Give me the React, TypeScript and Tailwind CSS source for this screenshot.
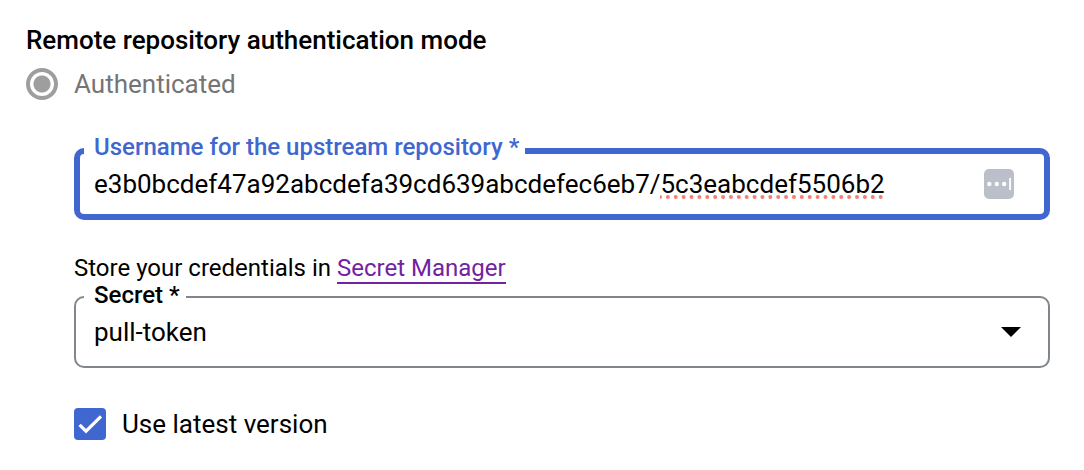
import { useState } from "react";

function SpellingMark() {
  return (
    <svg
      aria-hidden="true"
      className="pointer-events-none absolute bottom-[2px] left-[566px] h-1 w-[224px]"
      viewBox="0 0 224 4"
    >
      <line x1="0" y1="2" x2="223" y2="2" stroke="#f47f73" strokeWidth="4" strokeLinecap="round" strokeDasharray="0 7.88" />
    </svg>
  );
}

export default function App() {
  const [username, setUsername] = useState("e3b0bcdef47a92abcdefa39cd639abcdefec6eb7/5c3eabcdef5506b2");
  const [latest, setLatest] = useState(true);

  return (
    <main className="min-h-screen bg-white pt-6 pr-[34px] pb-[30px] pl-[26px] font-['Roboto',sans-serif] text-[26px] text-black">
      <h2 id="auth-mode" className="text-[26px] leading-8 font-medium">
        Remote repository authentication mode
      </h2>

      <div role="radiogroup" aria-labelledby="auth-mode" className="mt-3">
        <label className="flex items-center gap-4 leading-8 text-[#757575]">
          <input
            type="radio"
            name="auth-mode"
            checked
            disabled
            readOnly
            className="size-8 shrink-0 appearance-none rounded-full border-4 border-[#9e9e9e] bg-[radial-gradient(circle,#9e9e9e_8px,transparent_9px)]"
          />
          Authenticated
        </label>
      </div>

      <div className="mt-[35px] pl-12">
        <fieldset className="min-w-0 rounded-[10px] border-6 border-[#4067d0] pr-[30px] pb-[13px] pl-1">
          <legend className="pr-[6px] pb-2 pl-[10px] text-[24px] leading-6 font-medium text-[#4067d0]">
            <label htmlFor="username">Username for the upstream repository *</label>
          </legend>
          <div className="flex h-[34px] items-center gap-4 pl-[10px]">
            <div className="relative min-w-0 grow">
              <input
                id="username"
                type="text"
                required
                spellCheck={false}
                value={username}
                onChange={(e) => setUsername(e.target.value)}
                className="block h-[34px] w-full bg-transparent outline-none"
              />
              <SpellingMark />
            </div>
            <button type="button" aria-label="Fill from password manager" className="shrink-0">
              <svg viewBox="0 0 30 30" className="block size-[30px]" aria-hidden="true">
                <rect width="30" height="30" rx="5" fill="#bbbfca" />
                <circle cx="5.3" cy="15" r="2.2" fill="#fff" />
                <circle cx="12.8" cy="15" r="2.2" fill="#fff" />
                <circle cx="20.2" cy="15" r="2.2" fill="#fff" />
                <rect x="25.2" y="9" width="1.8" height="12" fill="#fff" />
              </svg>
            </button>
          </div>
        </fieldset>

        <p className="mt-[33px] text-[24px] leading-[30px]">
          Store your credentials in{" "}
          <a href="#secret-manager" className="border-b-2 border-[#7322a0] text-[#7322a0]">
            Secret Manager
          </a>
        </p>

        <fieldset className="min-w-0 rounded-[10px] border-2 border-[#80868b] pb-[13px] pl-2">
          <legend className="pr-[6px] pb-1 pl-[10px] text-[24px] leading-6 font-medium">
            <label htmlFor="secret">Secret *</label>
          </legend>
          <div className="relative">
            <select id="secret" required className="block h-[42px] w-full appearance-none bg-transparent pl-[10px] outline-none">
              <option>pull-token</option>
            </select>
            <svg
              aria-hidden="true"
              viewBox="0 0 20 10"
              className="pointer-events-none absolute top-4 right-[27px] h-[10px] w-5"
            >
              <path d="M0 0h20L10 10z" fill="#000" />
            </svg>
          </div>
        </fieldset>

        <label className="mt-10 flex items-center gap-4 leading-8">
          <span className="relative block size-8 shrink-0">
            <input
              type="checkbox"
              checked={latest}
              onChange={(e) => setLatest(e.target.checked)}
              className="peer block size-8 appearance-none rounded-[4px] border-2 border-[#4067d0] checked:bg-[#4067d0]"
            />
            <svg
              viewBox="0 0 32 32"
              aria-hidden="true"
              className="pointer-events-none absolute inset-0 hidden size-8 peer-checked:block"
            >
              <path d="M5.6 16.8L12 23.2L27 8.4" fill="none" stroke="#fff" strokeWidth="3.2" />
            </svg>
          </span>
          Use latest version
        </label>
      </div>
    </main>
  );
}
